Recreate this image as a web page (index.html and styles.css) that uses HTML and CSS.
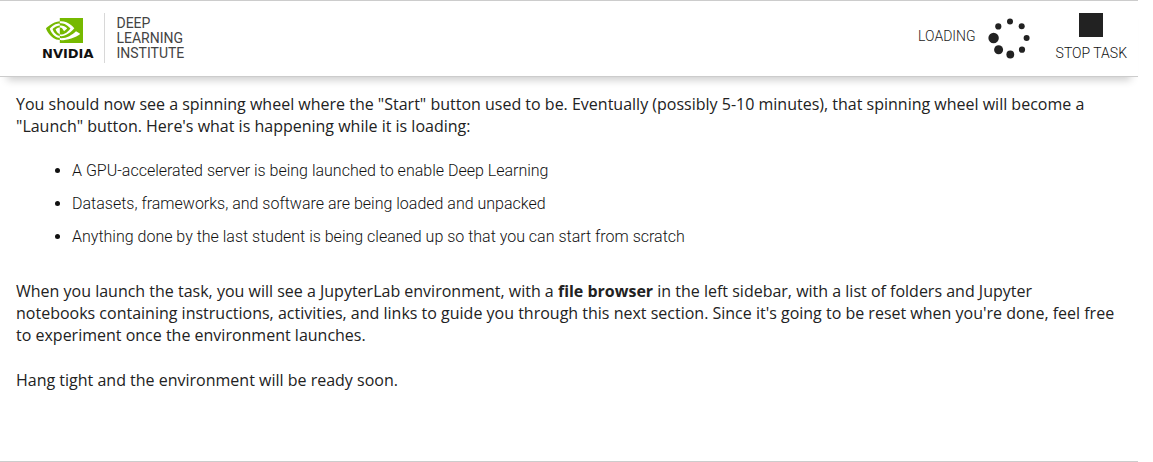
FILE: index.html
```html
<!DOCTYPE html>
<html lang="en">
<head>
<meta charset="utf-8">
<meta name="viewport" content="width=device-width, initial-scale=1">
<title>Deep Learning Institute</title>
<link rel="stylesheet" href="styles.css">
</head>
<body>
<div class="panel">
  <header class="topbar">
    <div class="brand">
      <div class="logo">
        <svg class="logo-eye" viewBox="0 4.063 24 15.87" preserveAspectRatio="none" aria-hidden="true"><path d="M8.948 8.798v-1.43a6.7 6.7 0 0 1 .424-.018c3.922-.124 6.493 3.374 6.493 3.374s-2.774 3.851-5.75 3.851c-.398 0-.787-.062-1.158-.185v-4.346c1.528.185 1.837.857 2.747 2.385l2.04-1.714s-1.492-1.952-4-1.952a6.016 6.016 0 0 0-.796.035m0-4.735v2.138l.424-.027c5.45-.185 9.01 4.47 9.01 4.47s-4.08 4.964-8.33 4.964c-.37 0-.733-.035-1.095-.097v1.325c.3.035.61.062.91.062 3.957 0 6.82-2.023 9.593-4.408.459.371 2.34 1.263 2.73 1.652-2.633 2.208-8.772 3.984-12.253 3.984-.335 0-.653-.018-.971-.053v1.864H24V4.063zm0 10.326v1.131c-3.657-.654-4.673-4.46-4.673-4.46s1.758-1.944 4.673-2.262v1.237H8.94c-1.528-.186-2.73 1.245-2.73 1.245s.68 2.412 2.739 3.11M2.456 10.9s2.164-3.197 6.5-3.533V6.201C4.153 6.59 0 10.653 0 10.653s2.35 6.802 8.948 7.42v-1.237c-4.84-.6-6.492-5.936-6.492-5.936z"/></svg>
        <span class="logo-name">NVIDIA</span>
      </div>
      <div class="institute">DEEP<br>LEARNING<br>INSTITUTE</div>
    </div>
    <div class="actions">
      <div class="loading" role="status">
        <span class="loading-label">LOADING</span>
        <svg class="spinner" viewBox="0 0 42 42" aria-hidden="true">
          <circle cx="22" cy="4.5" r="3"/>
          <circle cx="33.7" cy="9.3" r="3"/>
          <circle cx="38.6" cy="21" r="3"/>
          <circle cx="34" cy="32.7" r="3.1"/>
          <circle cx="22.3" cy="37.5" r="3.9"/>
          <circle cx="10.6" cy="32.8" r="4.5"/>
          <circle cx="5.6" cy="21" r="5.2"/>
          <circle cx="10.3" cy="9.4" r="3.1"/>
        </svg>
      </div>
      <button class="stop" type="button"><span class="stop-icon"></span>STOP TASK</button>
    </div>
  </header>
  <main class="content">
    <p>You should now see a spinning wheel where the "Start" button used to be. Eventually (possibly 5-10 minutes), that spinning wheel will become a "Launch" button. Here's what is happening while it is loading:</p>
    <ul class="steps">
      <li>A GPU-accelerated server is being launched to enable Deep Learning</li>
      <li>Datasets, frameworks, and software are being loaded and unpacked</li>
      <li>Anything done by the last student is being cleaned up so that you can start from scratch</li>
    </ul>
    <p>When you launch the task, you will see a JupyterLab environment, with a <strong>file browser</strong> in the left sidebar, with a list of folders and Jupyter notebooks containing instructions, activities, and links to guide you through this next section. Since it's going to be reset when you're done, feel free to experiment once the environment launches.</p>
    <p>Hang tight and the environment will be ready soon.</p>
  </main>
</div>
</body>
</html>
```

FILE: styles.css
```css
* { box-sizing: border-box; }

body {
  margin: 0;
  padding-right: 15px;
  background: #fff;
  color: #222;
  font-family: "Open Sans", sans-serif;
  font-size: 16px;
  line-height: 22px;
}

.panel {
  min-height: 100vh;
  border-top: 1px solid #ccc;
  border-bottom: 1px solid #ccc;
}

.topbar {
  display: flex;
  justify-content: space-between;
  padding: 12px 11px 13px 42px;
  border-bottom: 1px solid #ccc;
  box-shadow: 0 10px 8px -7px rgba(0, 0, 0, 0.2);
  font-family: Roboto, sans-serif;
}

.brand { display: flex; }

.logo {
  display: flex;
  flex-direction: column;
  padding: 5px 11px 0 0;
  border-right: 1px solid #d8d8d8;
}

.logo-eye {
  width: 37px;
  height: 25px;
  margin-left: 4px;
  fill: #76b900;
}

.logo-name {
  margin-top: 3px;
  color: #111;
  font: bold 13px/16px "DejaVu Sans", sans-serif;
}

.institute {
  padding: 3px 0 0 11px;
  color: #444;
  font-size: 14px;
  line-height: 15px;
}

.actions {
  display: flex;
  align-items: flex-start;
  gap: 26px;
}

.loading {
  display: flex;
  align-items: center;
  gap: 12px;
  padding-top: 4px;
  font-size: 14px;
  font-weight: 300;
}

.loading-label { padding-bottom: 4px; }

.spinner {
  width: 42px;
  height: 42px;
  fill: #222;
}

.stop {
  display: flex;
  flex-direction: column;
  align-items: center;
  gap: 6px;
  padding: 0;
  border: 0;
  background: none;
  color: #111;
  font: 300 14px/20px Roboto, sans-serif;
}

.stop-icon {
  width: 24px;
  height: 24px;
  background: #222;
}

.content { padding: 16px 23px 0 16px; }

.content p { margin: 0 0 23px; }

.steps {
  display: flex;
  flex-direction: column;
  gap: 11px;
  margin: 0 0 32px;
  padding-left: 56px;
  color: #111;
  font-family: Roboto, sans-serif;
  font-size: 16px;
  font-weight: 300;
}
```
